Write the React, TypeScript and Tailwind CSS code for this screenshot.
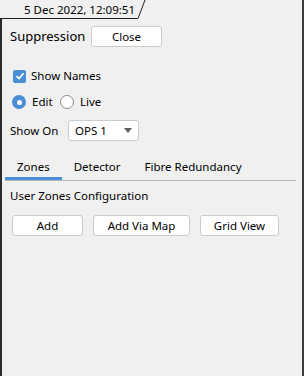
import React from "react";

const font = { fontFamily: '"Noto Sans", "Open Sans", sans-serif' };

const Button = ({ label, width }: { label: string; width: string }) => (
  <button
    className={`${width} h-[21px] shrink-0 rounded-[3px] border border-[#cccccc] bg-white text-[11.5px] text-black leading-none`}
  >
    {label}
  </button>
);

const Tab = ({ label, active }: { label: string; active?: boolean }) => (
  <div
    className={`px-[12px] h-full flex items-center -mb-px ${
      active ? "border-b-[3px] border-[#4a8fd6] pt-[3px]" : ""
    }`}
  >
    <span className="text-[11.5px] text-black whitespace-nowrap">{label}</span>
  </div>
);

export default function App() {
  return (
    <div
      className="w-[304px] h-[376px] bg-[#f0f0f0] flex flex-col border-r-2 border-[#3c3c3c] overflow-hidden"
      style={font}
    >
      <div className="h-[19px] flex shrink-0">
        <div className="w-[138px] border-b border-[#202020] flex items-center justify-end pr-[3px] pt-[1px]">
          <span className="text-[11.5px] text-black whitespace-nowrap">5 Dec 2022, 12:09:51</span>
        </div>
        <svg width="8" height="19" viewBox="0 0 8 19" className="shrink-0">
          <line x1="0" y1="18.5" x2="7" y2="0" stroke="#202020" strokeWidth="1" />
        </svg>
      </div>

      <div className="flex-1 border-l-2 border-[#2b2b2b] flex flex-col">
        <div className="mt-[7px] h-[21px] flex items-center">
          <span className="ml-[8px] w-[81px] shrink-0 text-[13px] text-black whitespace-nowrap">Suppression</span>
          <Button label="Close" width="w-[71px]" />
        </div>

        <div className="mt-[22px] h-[14px] flex items-center">
          <span className="ml-[11px] w-[13px] h-[13px] rounded-[2px] bg-[#4a8fd6] flex items-center justify-center">
            <svg width="10" height="10" viewBox="0 0 10 10">
              <path d="M1.5 5.2 L4 7.6 L8.6 2.2" fill="none" stroke="white" strokeWidth="1.6" />
            </svg>
          </span>
          <span className="ml-[5px] text-[11.5px] text-black">Show Names</span>
        </div>

        <div className="mt-[12px] h-[14px] flex items-center">
          <span className="ml-[10px] w-[14px] h-[14px] rounded-full bg-[#4a8fd6] flex items-center justify-center">
            <span className="w-[5px] h-[5px] rounded-full bg-white" />
          </span>
          <span className="ml-[6px] w-[22px] text-[11.5px] text-black">Edit</span>
          <span className="ml-[6px] w-[14px] h-[14px] rounded-full bg-white border border-[#8a8a8a]" />
          <span className="ml-[6px] text-[11.5px] text-black">Live</span>
        </div>

        <div className="mt-[11px] h-[21px] flex items-center">
          <span className="ml-[8px] w-[58px] text-[11.5px] text-black">Show On</span>
          <div className="w-[71px] h-[21px] rounded-[3px] border border-[#cccccc] bg-white flex items-center justify-between pl-[6px] pr-[6px]">
            <span className="text-[11.5px] text-black">OPS 1</span>
            <svg width="8" height="5" viewBox="0 0 8 5">
              <path d="M0 0 L8 0 L4 5 Z" fill="#606060" />
            </svg>
          </div>
        </div>

        <div className="mt-[13px] ml-[3px] w-[291px] h-[27px] flex items-stretch border-b border-[#b9b9b9]">
          <Tab label="Zones" active />
          <Tab label="Detector" />
          <Tab label="Fibre Redundancy" />
        </div>

        <div className="mt-[7px] h-[16px] flex items-center">
          <span className="ml-[8px] text-[11.5px] text-black">User Zones Configuration</span>
        </div>

        <div className="mt-[11px] ml-[10px] flex gap-[10px]">
          <Button label="Add" width="w-[71px]" />
          <Button label="Add Via Map" width="w-[97px]" />
          <Button label="Grid View" width="w-[79px]" />
        </div>
      </div>
    </div>
  );
}
